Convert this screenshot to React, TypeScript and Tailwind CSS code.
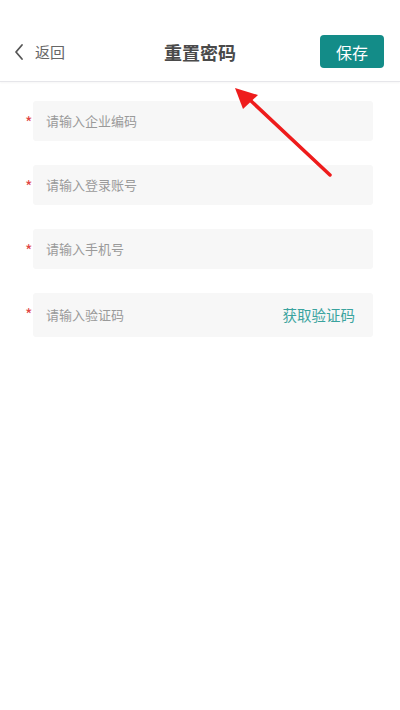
import { useState } from "react";

const fields = [
  { id: "code", placeholder: "请输入企业编码" },
  { id: "account", placeholder: "请输入登录账号" },
  { id: "phone", placeholder: "请输入手机号" },
];

const App = () => {
  const [values, setValues] = useState<Record<string, string>>({});

  return (
    <div
      className="relative w-[400px] h-[710px] bg-white overflow-hidden"
      style={{ fontFamily: '"Noto Sans CJK SC", "Noto Sans", sans-serif' }}
    >
      {/* Header */}
      <div className="h-[82px] pt-[22px] flex items-center justify-between px-[12px] border-b border-[#e6e6ea] shadow-[0_1px_2px_rgba(0,0,0,0.04)]">
        <div className="flex items-center gap-[8px] w-[100px]">
          <svg width="14" height="18" viewBox="0 0 14 18" fill="none" className="ml-[1px]">
            <path d="M9 2 L3 9 L9 16" stroke="#555" strokeWidth="1.8" strokeLinecap="round" strokeLinejoin="round" />
          </svg>
          <span className="text-[15px] text-[#666] leading-none">返回</span>
        </div>
        <h1 className="text-[18px] font-bold text-[#4a4a4a] leading-none">重置密码</h1>
        <div className="w-[100px] flex justify-end pr-[4px]">
          <button className="w-[64px] h-[33px] rounded-[4px] bg-[#138c88] text-white text-[16px] leading-none">
            保存
          </button>
        </div>
      </div>

      {/* Form */}
      <div className="flex flex-col gap-[24px] pt-[19px] pl-[25px] pr-[27px]">
        {fields.map((f) => (
          <div key={f.id} className="flex items-center">
            <span className="w-[8px] text-[#e04545] text-[16px] leading-none mt-[2px]">*</span>
            <div className="flex-1 h-[40px] bg-[#f7f7f7] rounded-[3px] flex items-center px-[13px]">
              <input
                className="flex-1 bg-transparent outline-none text-[13px] text-[#333] placeholder:text-[#9a9a9a]"
                placeholder={f.placeholder}
                value={values[f.id] ?? ""}
                onChange={(e) => setValues({ ...values, [f.id]: e.target.value })}
              />
            </div>
          </div>
        ))}
        <div className="flex items-center">
          <span className="w-[8px] text-[#e04545] text-[16px] leading-none -mt-[2px]">*</span>
          <div className="flex-1 h-[44px] bg-[#f7f7f7] rounded-[3px] flex items-center px-[13px]">
            <input
              className="flex-1 min-w-0 bg-transparent outline-none text-[13px] text-[#333] placeholder:text-[#9a9a9a]"
              placeholder="请输入验证码"
              value={values.sms ?? ""}
              onChange={(e) => setValues({ ...values, sms: e.target.value })}
            />
            <span className="text-[14.5px] text-[#3aa39e] mr-[5px]">获取验证码</span>
          </div>
        </div>
      </div>

      {/* Annotation arrow */}
      <svg className="absolute left-0 top-0 pointer-events-none" width="400" height="710">
        <line x1="330" y1="175" x2="250" y2="100" stroke="#ee1c1c" strokeWidth="3.5" strokeLinecap="round" />
        <polygon points="235,88 258,95 243,109" fill="#ee1c1c" />
      </svg>
    </div>
  );
};

export default App;
